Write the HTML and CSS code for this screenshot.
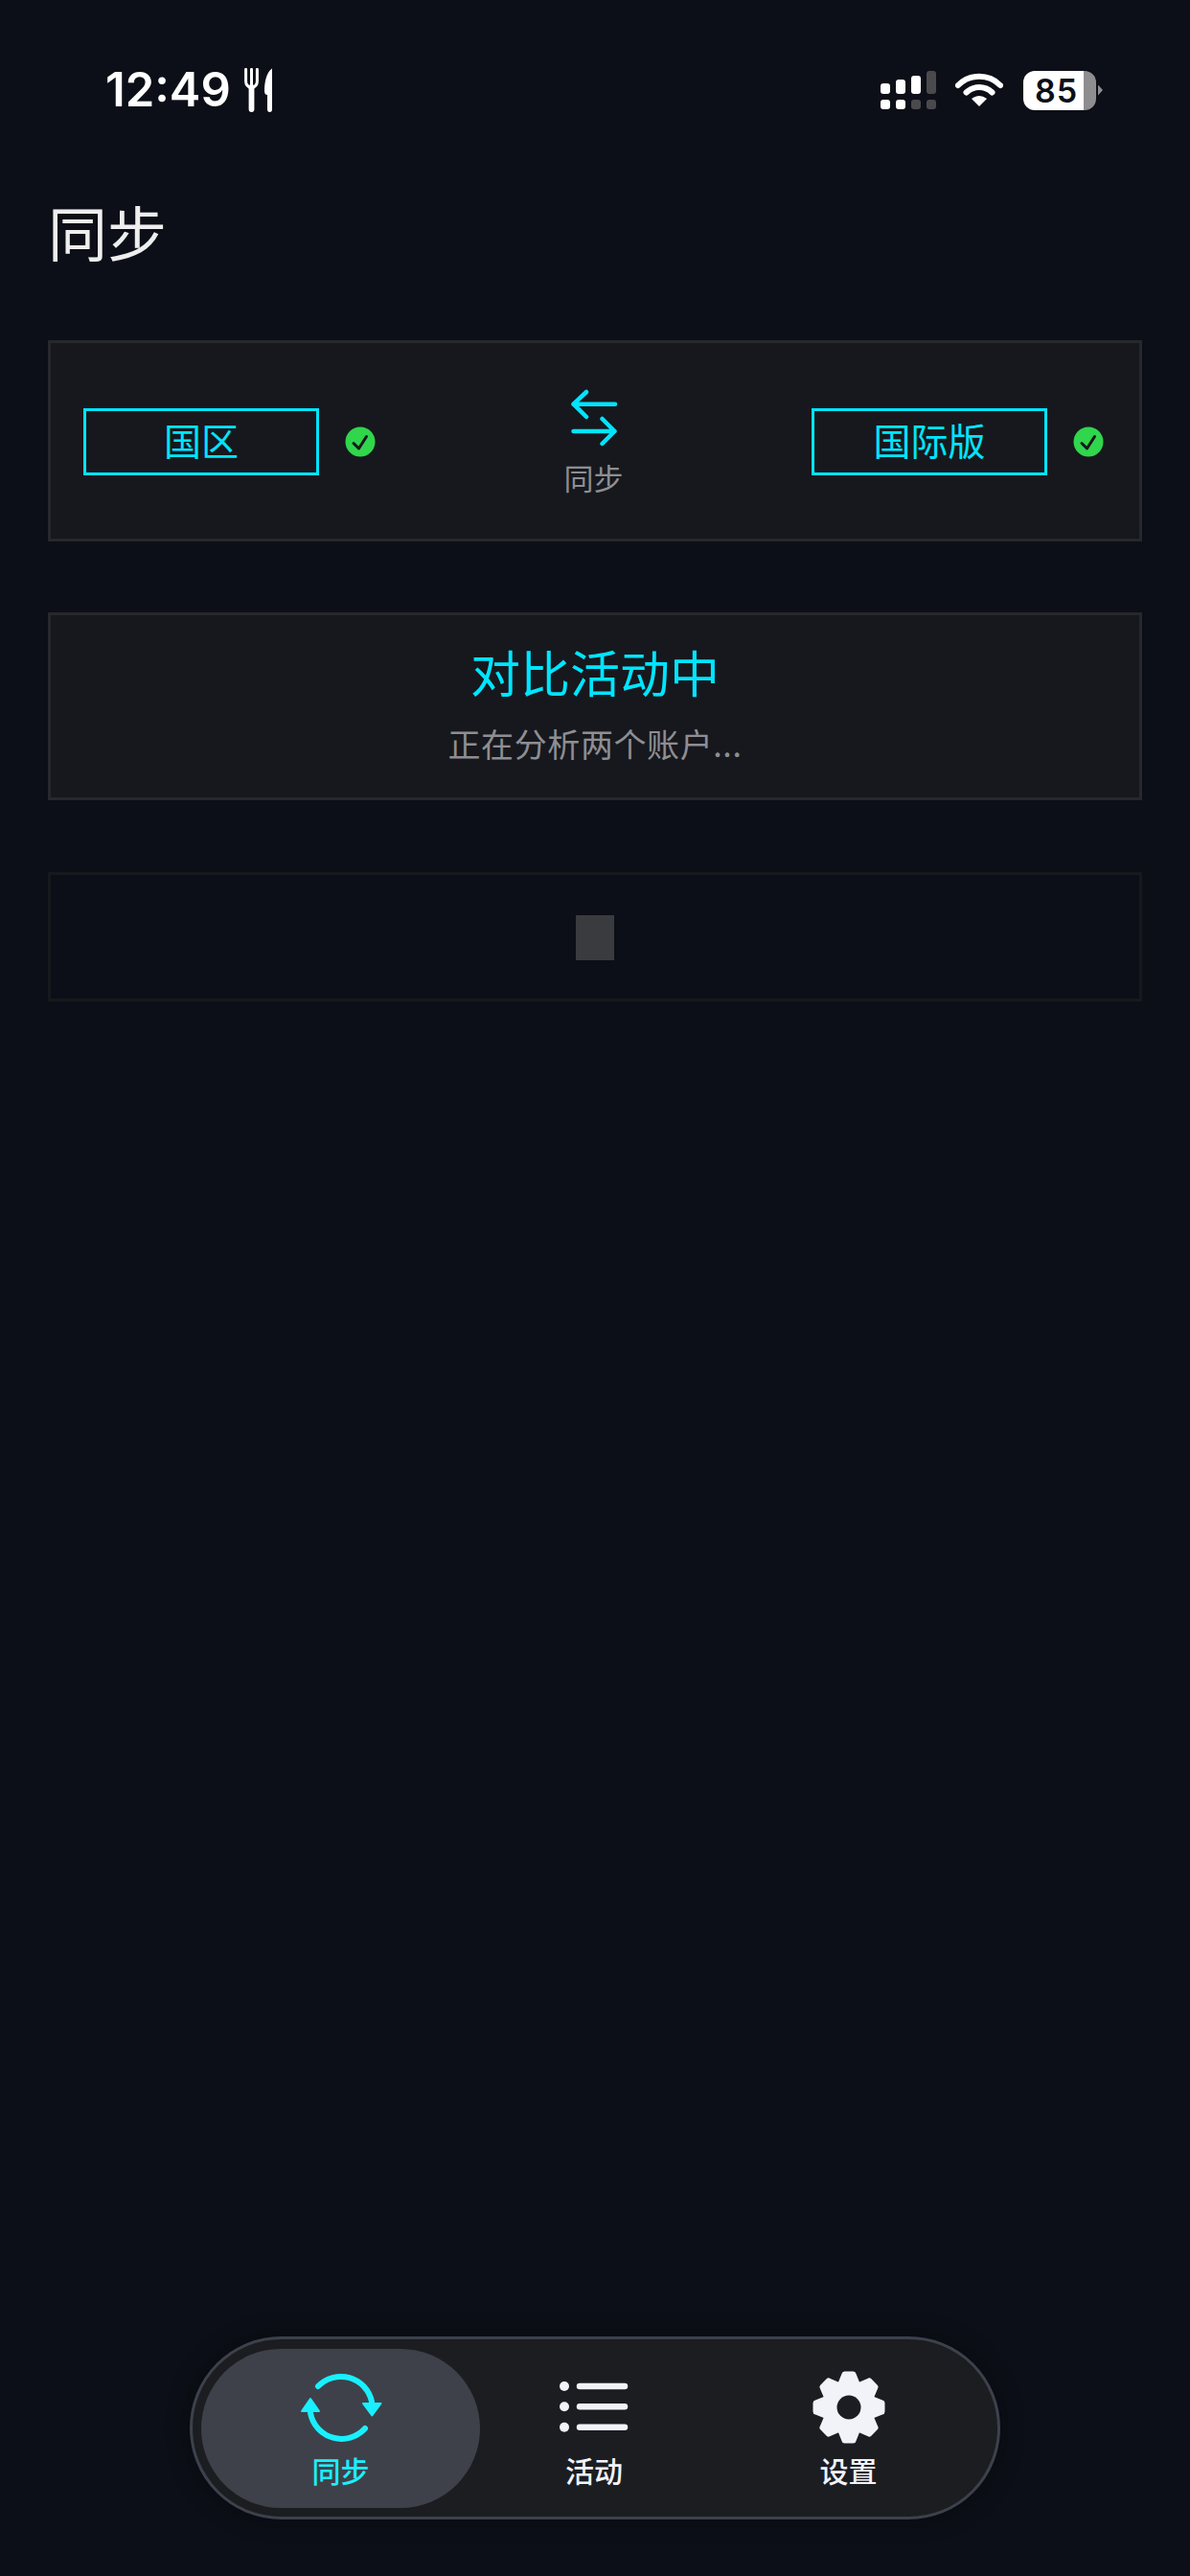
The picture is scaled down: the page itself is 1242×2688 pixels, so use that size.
FILE: index.html
```html
<!DOCTYPE html>
<html lang="zh-CN">
<head>
  <meta charset="UTF-8">
  <meta name="viewport" content="width=device-width, initial-scale=1.0">
  <title>同步</title>
  <link rel="stylesheet" href="styles.css">
</head>
<body>
  <div class="page">
    <div class="status-bar">
      <div class="status-left">
        <span class="time">12:49</span>
        <svg class="fork-icon" width="30" height="46" viewBox="0 0 30 46">
          <path class="ico-line" d="M1.6 1.4V14Q1.6 19 7.5 21Q13.4 19 13.4 14V1.4M7.5 1.4V20" stroke-width="3"/>
          <path class="ico-line" d="M7.5 20V43" stroke-width="5.8"/>
          <path class="ico-white" d="M29 .5C23.5 4 21 14 21 24C21 27 22.5 28 24 28V43Q24 46 26.5 46Q29 46 29 43Z"/>
        </svg>
      </div>
      <div class="status-right">
        <svg class="signal-icon" width="59" height="40" viewBox="0 0 59 40">
          <rect class="ico-white" x="0" y="13" width="10" height="11" rx="3"/>
          <rect class="ico-white" x="16" y="9" width="10" height="15" rx="3"/>
          <rect class="ico-white" x="32" y="5" width="10" height="19" rx="3"/>
          <rect class="ico-off" x="48" y="0" width="10" height="24" rx="3"/>
          <rect class="ico-white" x="0" y="30" width="10" height="10" rx="3"/>
          <rect class="ico-white" x="16" y="30" width="10" height="10" rx="3"/>
          <rect class="ico-off" x="32" y="30" width="10" height="10" rx="3"/>
          <rect class="ico-off" x="48" y="30" width="10" height="10" rx="3"/>
        </svg>
        <svg class="wifi-icon" width="50" height="36" viewBox="0 0 50 36">
          <path class="ico-line" d="M3 13A31 31 0 0 1 47 13" stroke-width="6" stroke-linecap="butt"/>
          <path class="ico-line" d="M11.5 20.5A19.5 19.5 0 0 1 38.5 20.5" stroke-width="6" stroke-linecap="butt"/>
          <path class="ico-white" d="M25 35L17 27Q25 21 33 27Z"/>
        </svg>
        <div class="battery"><span class="battery-num">85</span></div>
        <span class="battery-nub"></span>
      </div>
    </div>

    <h1 class="page-title">同步</h1>

    <div class="card sync-card">
      <div class="account">
        <div class="account-name">国区</div>
        <svg class="check" width="32" height="32" viewBox="-16 -16 32 32">
          <circle class="check-bg" r="15.5"/>
          <path class="check-mark" d="M-7 1.5L-1.5 7L6.5 -5.5"/>
        </svg>
      </div>
      <div class="sync-middle">
        <svg width="50" height="60" viewBox="0 0 50 60">
          <path class="ico-cyan" d="M3.5 15.7H47M17 3L3.5 15.7L17 29M3.5 44H46.5M33.5 31L46.5 44L33.5 57"/>
        </svg>
        <span class="sync-label">同步</span>
      </div>
      <div class="account">
        <div class="account-name">国际版</div>
        <svg class="check" width="32" height="32" viewBox="-16 -16 32 32">
          <circle class="check-bg" r="15.5"/>
          <path class="check-mark" d="M-7 1.5L-1.5 7L6.5 -5.5"/>
        </svg>
      </div>
    </div>

    <div class="card compare-card">
      <div class="compare-title">对比活动中</div>
      <div class="compare-sub">正在分析两个账户...</div>
    </div>

    <div class="card empty-card">
      <div class="placeholder"></div>
    </div>

    <nav class="tab-bar">
      <div class="tab tab-active">
        <svg width="90" height="80" viewBox="-45 -40 90 80">
          <path class="sync-arc" d="M-24 -22A33 33 0 0 1 32 -6M25 22A33 33 0 0 1 -32 6"/>
          <path class="sync-head" d="M23 -4H41.5L32.3 8.5ZM-41 4H-23L-32 -9Z"/>
        </svg>
        <span class="tab-label">同步</span>
      </div>
      <div class="tab">
        <svg width="90" height="80" viewBox="-45 -40 90 80">
          <circle class="tab-fill" cx="-31" cy="-22" r="5"/>
          <circle class="tab-fill" cx="-31" cy="-0.7" r="5"/>
          <circle class="tab-fill" cx="-31" cy="20.7" r="5"/>
          <path class="list-line" d="M-15 -22H32M-15 -0.7H32M-15 20.7H32"/>
        </svg>
        <span class="tab-label">活动</span>
      </div>
      <div class="tab">
        <svg width="90" height="80" viewBox="-45 -40 90 80">
          <circle class="tab-fill" r="28"/>
          <path class="tab-fill" id="tooth" d="M-11.5 -25L-7.5 -35Q-7 -37.5 -4.5 -37.5H4.5Q7 -37.5 7.5 -35L11.5 -25Z"/>
          <use href="#tooth" transform="rotate(45)"/>
          <use href="#tooth" transform="rotate(90)"/>
          <use href="#tooth" transform="rotate(135)"/>
          <use href="#tooth" transform="rotate(180)"/>
          <use href="#tooth" transform="rotate(225)"/>
          <use href="#tooth" transform="rotate(270)"/>
          <use href="#tooth" transform="rotate(315)"/>
          <circle class="gear-hole" r="12.5"/>
        </svg>
        <span class="tab-label">设置</span>
      </div>
    </nav>
  </div>
</body>
</html>
```

FILE: styles.css
```css
* {
  box-sizing: border-box;
}
body {
  margin: 0;
  background-color: #0c0f17;
  font-family: "Noto Sans CJK SC", Inter, sans-serif;
}
.page {
  display: flex;
  flex-direction: column;
  height: 2688px;
  padding: 0 50px 59px;
  overflow: hidden;
}

/* status bar */
.status-bar {
  display: flex;
  justify-content: space-between;
  align-items: center;
  height: 70px;
  margin: 59px 41px 0 60px;
}
.status-left {
  display: flex;
  align-items: center;
  gap: 14px;
}
.time {
  font-family: Inter, sans-serif;
  font-size: 49px;
  font-weight: 600;
  line-height: 60px;
  color: #fff;
}
.status-right {
  display: flex;
  align-items: center;
}
.ico-white {
  fill: #fff;
}
.ico-off {
  fill: #4a4a4d;
}
.ico-line {
  fill: none;
  stroke: #fff;
  stroke-linecap: round;
}
.wifi-icon {
  margin-left: 19px;
}
.battery {
  display: flex;
  justify-content: center;
  align-items: center;
  width: 76px;
  height: 41px;
  margin-left: 21px;
  padding-right: 7px;
  border-radius: 12px;
  background: linear-gradient(90deg, #fff 63px, #8e8e90 63px);
}
.battery-num {
  font-family: Inter, sans-serif;
  font-size: 34px;
  font-weight: 600;
  line-height: 41px;
  letter-spacing: 1px;
  color: #0c0f17;
}
.battery-nub {
  width: 5px;
  height: 11px;
  margin-left: 2px;
  background-color: #8e8e90;
  clip-path: polygon(0 0, 100% 50%, 0 100%);
}

.page-title {
  margin: 72px 0 74px;
  font-size: 62px;
  font-weight: 400;
  line-height: 80px;
  color: #eeeeef;
}

/* cards */
.card {
  border: 3px solid #26282c;
  background-color: #16181d;
}
.sync-card {
  display: flex;
  justify-content: space-between;
  align-items: center;
  height: 210px;
  padding: 2px 37px 0 34px;
  margin-bottom: 74px;
}
.account {
  display: flex;
  align-items: center;
  gap: 27px;
}
.account-name {
  width: 246px;
  height: 70px;
  border: 3px solid #00e5ff;
  font-size: 39px;
  line-height: 58px;
  text-align: center;
  color: #00e5ff;
}
.check-bg {
  fill: #30d64c;
}
.check-mark {
  fill: none;
  stroke: #16181d;
  stroke-width: 3;
  stroke-linecap: round;
  stroke-linejoin: round;
}
.sync-middle {
  display: flex;
  flex-direction: column;
  align-items: center;
  margin-bottom: -1px;
}
.ico-cyan {
  fill: none;
  stroke: #00e5ff;
  stroke-width: 4.5;
  stroke-linecap: round;
  stroke-linejoin: round;
}
.sync-label {
  margin-top: 13px;
  font-size: 31px;
  line-height: 38px;
  color: #8e8e93;
}
.compare-card {
  height: 196px;
  margin-bottom: 75px;
  padding-top: 29px;
  text-align: center;
}
.compare-title {
  font-size: 52px;
  line-height: 60px;
  color: #00e5ff;
}
.compare-sub {
  margin-top: 25px;
  font-size: 34px;
  line-height: 40px;
  letter-spacing: .6px;
  color: #8e8e93;
}
.empty-card {
  display: flex;
  justify-content: center;
  align-items: center;
  height: 135px;
  padding-top: 2px;
  border-color: #17191d;
  background-color: #0c0f17;
}
.placeholder {
  width: 40px;
  height: 47px;
  background-color: #3a3b3f;
}

/* bottom tabs */
.tab-bar {
  display: grid;
  grid-template-columns: 291px 238px 293px;
  align-self: center;
  width: 846px;
  height: 191px;
  margin-top: auto;
  padding: 10px 9px;
  border: 3px solid #3c414c;
  border-radius: 96px;
  background-color: #1c1d21;
  box-shadow: 0 0 24px rgba(0, 0, 0, .35);
}
.tab {
  display: flex;
  flex-direction: column;
  align-items: center;
  height: 166px;
  padding-top: 21px;
  border-radius: 83px;
  color: #f2f3f8;
}
.tab-active {
  background-color: #3e4149;
  color: #19f0ff;
}
.tab-label {
  margin-top: 7px;
  font-size: 30px;
  font-weight: 500;
  line-height: 36px;
}
.tab-fill {
  fill: #f2f3f8;
}
.list-line {
  fill: none;
  stroke: #f2f3f8;
  stroke-width: 6.5;
  stroke-linecap: round;
}
.gear-hole {
  fill: #1c1d21;
}
.sync-arc {
  fill: none;
  stroke: #19f0ff;
  stroke-width: 6;
  stroke-linecap: round;
}
.sync-head {
  fill: #19f0ff;
  stroke: #19f0ff;
  stroke-width: 2;
  stroke-linejoin: round;
}
```
